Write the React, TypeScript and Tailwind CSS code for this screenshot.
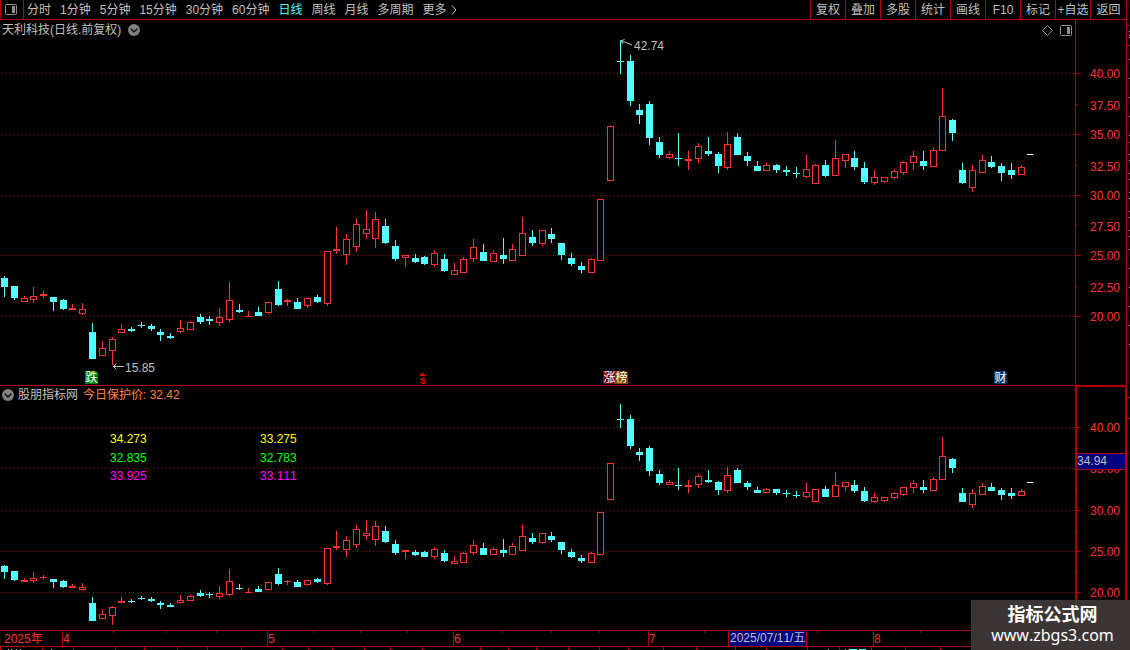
import React from "react";

type Candle = [high: number, top: number, bottom: number, low: number, rising: 0 | 1];

// One entry per trading day, in units of the main price scale (40.00 sits at 73, 20.00 at 316).
const candles: Candle[] = [
  [276, 278, 287, 297, 0], [286, 286, 298, 300, 0], [296, 298, 302, 302, 1], [287, 296, 300, 303, 1],
  [291, 294, 296, 298, 1], [297, 297, 302, 311, 0], [299, 300, 309, 310, 0], [304, 308, 310, 310, 1],
  [303, 309, 314, 315, 1], [323, 332, 359, 359, 0], [341, 348, 356, 356, 1], [337, 339, 351, 365, 1],
  [324, 329, 333, 333, 1], [327, 329, 331, 332, 0], [322, 325, 326, 328, 0], [324, 326, 329, 331, 0],
  [329, 332, 335, 341, 0], [333, 336, 338, 339, 0], [320, 328, 332, 333, 1], [321, 322, 330, 330, 1],
  [314, 317, 322, 324, 0], [316, 319, 321, 325, 0], [308, 317, 323, 326, 1], [282, 300, 320, 322, 1],
  [304, 310, 312, 313, 0], [311, 316, 317, 317, 1], [307, 312, 316, 316, 0], [302, 302, 313, 314, 1],
  [281, 289, 305, 306, 0], [299, 300, 302, 306, 1], [298, 302, 309, 309, 0], [298, 298, 306, 308, 1],
  [295, 297, 302, 303, 0], [251, 251, 304, 306, 1], [227, 249, 251, 254, 1], [234, 239, 255, 265, 1],
  [218, 224, 247, 252, 1], [210, 229, 234, 239, 1], [212, 219, 239, 248, 1], [219, 226, 243, 244, 0],
  [240, 246, 259, 261, 0], [255, 255, 258, 267, 1], [254, 258, 262, 263, 0], [256, 257, 264, 265, 0],
  [250, 253, 265, 267, 1], [254, 259, 271, 272, 0], [263, 270, 275, 275, 1], [257, 259, 273, 273, 1],
  [239, 247, 259, 262, 1], [244, 252, 261, 261, 0], [250, 253, 262, 262, 1], [238, 255, 259, 264, 0],
  [244, 249, 261, 261, 1], [217, 233, 256, 256, 1], [230, 237, 243, 246, 0], [230, 230, 244, 246, 1],
  [228, 234, 239, 243, 0], [243, 243, 255, 260, 0], [253, 258, 264, 266, 0], [262, 266, 270, 273, 0],
  [258, 259, 273, 273, 1], [199, 199, 261, 261, 1], [126, 126, 181, 181, 1], [40, 61, 62, 74, 0],
  [55, 61, 101, 106, 0], [104, 110, 115, 124, 0], [101, 104, 138, 145, 0], [137, 142, 155, 158, 0],
  [151, 154, 158, 159, 1], [133, 158, 159, 166, 0], [151, 159, 161, 170, 1], [143, 146, 159, 163, 1],
  [137, 151, 154, 156, 0], [152, 154, 166, 173, 0], [132, 144, 168, 170, 1], [133, 137, 155, 155, 0],
  [152, 156, 161, 166, 0], [161, 166, 171, 171, 0], [163, 165, 171, 171, 1], [164, 165, 170, 173, 0],
  [166, 170, 172, 176, 0], [167, 173, 174, 178, 0], [155, 169, 177, 178, 1], [164, 165, 184, 184, 1],
  [160, 165, 176, 177, 0], [140, 158, 176, 176, 1], [154, 154, 161, 168, 1], [151, 158, 167, 170, 0],
  [162, 168, 182, 184, 0], [170, 177, 183, 185, 1], [177, 177, 182, 183, 1], [169, 171, 178, 179, 1],
  [161, 162, 173, 175, 1], [151, 156, 163, 170, 1], [151, 161, 166, 170, 0], [147, 150, 167, 167, 1],
  [88, 116, 151, 151, 1], [119, 120, 133, 141, 0], [163, 170, 183, 184, 0], [165, 170, 188, 192, 1],
  [155, 160, 173, 173, 1], [156, 162, 167, 168, 0], [163, 166, 173, 181, 0], [163, 170, 175, 179, 0],
  [165, 167, 175, 175, 1],
];

const mainScale = (y: number) => y;
const subScale = (y: number) => Math.round(427.2 + (y - 73.5) * 0.679);

const UP = "#ff3232";
const DOWN = "#54ffff";
const LINE = "#b00000";
const SILVER = "#c0c0c0";

function Candles({ scale }: { scale: (y: number) => number }) {
  return (
    <g shapeRendering="crispEdges">
      {candles.map(([h, t, b, l, rising], i) => {
        const x = Math.round(4 + 9.775 * i);
        const high = scale(h);
        const top = scale(t);
        const bottom = Math.max(scale(b), top + 1);
        const low = scale(l);
        const color = rising ? UP : DOWN;
        const hollow = rising === 1 && bottom - top > 2;
        return (
          <g key={i}>
            {top > high && <rect x={x} y={high} width={1} height={top - high} fill={color} />}
            {low > bottom && <rect x={x} y={bottom} width={1} height={low - bottom} fill={color} />}
            {hollow ? (
              <rect x={x - 2.5} y={top + 0.5} width={6} height={bottom - top - 1} fill="#000" stroke={color} />
            ) : (
              <rect x={x - 3} y={top} width={7} height={bottom - top} fill={color} />
            )}
          </g>
        );
      })}
      <rect x={1027} y={scale(154)} width={6} height={1} fill="#fff" />
    </g>
  );
}

function GridLines({ ys }: { ys: number[] }) {
  return (
    <g shapeRendering="crispEdges">
      {ys.map((y) => (
        <line key={y} x1={1} x2={1075} y1={y + 0.5} y2={y + 0.5} stroke="#a81414" strokeDasharray="1 3" />
      ))}
    </g>
  );
}

function ChevronBadge() {
  return (
    <svg className="block h-3 w-3" viewBox="0 0 12 12" aria-hidden="true">
      <circle cx="6" cy="6" r="6" fill="#808080" />
      <path d="M2.8 4.8 6 8l3.2-3.2" fill="none" stroke="#111" strokeWidth="1.5" />
    </svg>
  );
}

function PanelIcon() {
  return (
    <svg className="block h-[11px] w-3" viewBox="0 0 12 11" aria-hidden="true">
      <rect x="0.5" y="0.5" width="11" height="10" rx="1" fill="none" stroke="#909090" />
      <rect x="7" y="2" width="3" height="7" fill="#909090" />
    </svg>
  );
}

function Marker({ x, color, label }: { x: number; color: string; label: string }) {
  return (
    <g>
      <path d={`M${x} 371h11l2 2v11h-13z`} fill={color} />
      <text x={x + 0.5} y={382} fill="#fff">{label}</text>
    </g>
  );
}

const periods = ["分时", "1分钟", "5分钟", "15分钟", "30分钟", "60分钟", "日线", "周线", "月线", "多周期"];
const actions = ["复权", "叠加", "多股", "统计", "画线", "F10", "标记", "+自选"];

function Toolbar() {
  return (
    <nav className="flex h-5 items-stretch border-b border-[#b00000] text-[#c0c0c0]">
      <button aria-label="侧栏" className="flex w-6 items-center border-x border-[#b00000] pl-1">
        <PanelIcon />
      </button>
      <div className="flex flex-1 items-center gap-[9px] pl-[3px]">
        {periods.map((p) => (
          <button key={p} className={p === "日线" ? "whitespace-nowrap text-[#54ffff]" : "whitespace-nowrap"}>
            {p}
          </button>
        ))}
        <button className="flex items-center gap-1 whitespace-nowrap">
          更多
          <svg className="h-[10px] w-[6px]" viewBox="0 0 6 10" aria-hidden="true">
            <path d="M1 0.5 5 5 1 9.5" fill="none" stroke={SILVER} />
          </svg>
        </button>
      </div>
      <div className="flex items-stretch">
        {actions.map((a) => (
          <button key={a} className="w-[35px] whitespace-nowrap border-l border-[#b00000]">
            {a}
          </button>
        ))}
        <button className="w-9 whitespace-nowrap border-l border-[#b00000]">返回</button>
      </div>
    </nav>
  );
}

const mainTicks: [number, number, string][] = [
  [73, 78, "40.00"], [104, 110, "37.50"], [134, 139, "35.00"], [165, 171, "32.50"], [195, 200, "30.00"],
  [225, 231, "27.50"], [255, 260, "25.00"], [286, 292, "22.50"], [316, 321, "20.00"],
];
const subTicks: [number, string][] = [[427, "40.00"], [468, "35.00"], [510, "30.00"], [551, "25.00"], [592, "20.00"]];

function MainPanel() {
  return (
    <section className="flex border-b border-[#b00000]">
      <div className="min-w-0 flex-1">
        <header className="flex h-5 items-center pl-[2px] pr-[3px] text-[#c0c0c0]">
          <h1 className="whitespace-nowrap">天利科技(日线.前复权)</h1>
          <button aria-label="展开" className="ml-[7px]"><ChevronBadge /></button>
          <button aria-label="标注" className="ml-auto">
            <svg className="block h-[11px] w-[11px]" viewBox="0 0 11 11" aria-hidden="true">
              <path d="M5.5 0.5l5 5-5 5-5-5z" fill="none" stroke="#909090" />
            </svg>
          </button>
          <button aria-label="侧栏" className="ml-[7px]"><PanelIcon /></button>
        </header>
        <svg className="block h-[345px] w-full overflow-visible" viewBox="0 40 1075 345" fontSize="12">
          <GridLines ys={[73, 134, 195, 255, 316]} />
          <Candles scale={mainScale} />
          <g stroke={SILVER} fill="none">
            <path d="M113 366.5h11M116.5 363.5l-3 3 3 3" />
            <path d="M621 41.5l4 .5 7 3M624.5 39.5l-3.500 1.500 2 3" />
          </g>
          <text x="125" y="372" fill={SILVER}>15.85</text>
          <text x="634" y="50" fill={SILVER}>42.74</text>
          <Marker x={85} color="#008000" label="跌" />
          <Marker x={603} color="#800000" label="涨" />
          <Marker x={615} color="#804000" label="榜" />
          <Marker x={994} color="#003a70" label="财" />
          <path d="M422.500 372.500l3.500 3.500h-7z" fill="#ff0000" />
          <text x="420" y="384" fontSize="9" fontWeight="700" fill="#ff0000">S</text>
        </svg>
      </div>
      <svg className="block h-[365px] w-[51px]" viewBox="1075 20 51 365" fontSize="12" fill={UP}>
        <g shapeRendering="crispEdges" fill={LINE}>
          <rect x="1075" y="20" width="1" height="365" />
          {mainTicks.map(([y], i) => (
            <rect key={y} x="1076" y={y} width={i % 2 ? 2 : 5} height="1" />
          ))}
        </g>
        {mainTicks.map(([, y, label]) => (
          <text key={label} x="1090" y={y}>{label}</text>
        ))}
      </svg>
    </section>
  );
}

const readings: [number, string, string, string][] = [
  [443, "#ffff00", "34.273", "33.275"],
  [462, "#00ff00", "32.835", "32.783"],
  [480, "#ff00ff", "33.925", "33.111"],
];

function SubPanel() {
  return (
    <section className="flex">
      <div className="min-w-0 flex-1">
        <header className="flex h-[17px] items-center pl-[2px] text-[#c0c0c0]">
          <button aria-label="展开"><ChevronBadge /></button>
          <h2 className="ml-1 whitespace-nowrap">股朋指标网</h2>
          <p className="ml-[5px] whitespace-nowrap text-[#ff8040]">今日保护价: 32.42</p>
        </header>
        <svg className="block h-[227px] w-full" viewBox="0 403 1075 227" fontSize="12">
          <GridLines ys={subTicks.map(([y]) => y)} />
          {readings.map(([y, color, a, b]) => (
            <g key={y} fill={color}>
              <text x="110" y={y}>{a}</text>
              <text x="260" y={y}>{b}</text>
            </g>
          ))}
          <Candles scale={subScale} />
        </svg>
      </div>
      <svg className="block h-[244px] w-[51px]" viewBox="1075 386 51 244" fontSize="12" fill={UP}>
        <g shapeRendering="crispEdges" fill={LINE}>
          <rect x="1075" y="386" width="2" height="244" />
          <rect x="1125" y="386" width="1" height="244" />
          <rect x="1076" y="386" width="50" height="1" />
          {subTicks.map(([y]) => (
            <g key={y}>
              <rect x="1077" y={y} width="4" height="1" />
              <rect x="1077" y={y + 21} width="1" height="1" />
            </g>
          ))}
        </g>
        {subTicks.map(([y, label]) => (
          <text key={label} x="1090" y={y + 5}>{label}</text>
        ))}
        <g shapeRendering="crispEdges">
          <rect x="1077" y="453" width="48" height="17" fill={LINE} />
          <rect x="1077" y="454" width="48" height="15" fill="#000080" />
        </g>
        <text x="1077" y="465" fill={SILVER}>34.94</text>
      </svg>
    </section>
  );
}

const months: [number, string][] = [[62, "4"], [267, "5"], [453, "6"], [648, "7"], [873, "8"]];
const weekTicks = [113, 165, 216, 314, 360, 407, 502, 551, 599, 704, 817, 920];
const lowerTicks = [
  0, 42, 73, 115, 144, 177, 207, 241, 282, 308, 332, 364, 390, 422, 480, 508, 536, 568, 599, 628, 663, 696, 735, 766,
  807, 839, 871, 905, 940,
];

function TimeAxis() {
  return (
    <svg className="block h-5 w-full" viewBox="0 630 1126 20" fontSize="12" fill={UP}>
      <g shapeRendering="crispEdges" fill={LINE}>
        <rect x="0" y="630" width="1126" height="1" />
        <rect x="0" y="646" width="1126" height="1" />
        {months.map(([x]) => <rect key={x} x={x} y="631" width="1" height="15" />)}
        {weekTicks.map((x) => <rect key={x} x={x} y="631" width="1" height="2" />)}
        {lowerTicks.map((x) => <rect key={x} x={x} y="647" width="1" height="3" />)}
        <rect x="728" y="631" width="79" height="15" />
        <rect x="729" y="631" width="77" height="15" fill="#000080" />
        <g fill={SILVER}>
          {[8, 11, 16, 20, 51, 828, 845].map((x) => <rect key={x} x={x} y="649" width="1" height="1" />)}
        </g>
        <rect x="849" y="649" width="8" height="1" fill={DOWN} />
        <rect x="859" y="649" width="7" height="1" fill={DOWN} />
      </g>
      <text x="4" y="643">2025年</text>
      {months.map(([x, label]) => <text key={label} x={x + 1} y="643">{label}</text>)}
      <text x="730" y="642" fill={SILVER}>2025/07/11/五</text>
    </svg>
  );
}

const edgeRed = [25, 45, 142, 397, 418];
const edgeWhite = [31, 35, 37, 59, 78, 97, 116, 135, 154, 160, 173, 179, 192, 198, 211, 217, 230, 236, 249, 268, 287, 306, 325, 344];

function EdgeRuler() {
  return (
    <svg className="block h-[650px] w-1" viewBox="0 0 4 650" shapeRendering="crispEdges" aria-hidden="true">
      <rect width="1" height="650" fill={LINE} />
      {edgeRed.map((y) => <rect key={y} x="1" y={y} width="3" height="1" fill={LINE} />)}
      {edgeWhite.map((y) => <rect key={y} x="3" y={y} width="1" height="1" fill={SILVER} />)}
    </svg>
  );
}

export default function App() {
  return (
    <main className="relative flex min-h-screen items-start overflow-hidden bg-black font-['Liberation_Sans','Noto_Sans_CJK_SC',sans-serif] text-[12px] leading-4 [font-kerning:none]">
      <div className="min-w-0 flex-1">
        <Toolbar />
        <MainPanel />
        <SubPanel />
        <TimeAxis />
      </div>
      <EdgeRuler />
      <aside className="absolute bottom-0 right-0 flex h-[50px] w-[159px] flex-col items-center justify-center bg-[#3b3535] pl-1 text-white">
        <strong className="text-[18px] leading-5">指标公式网</strong>
        <a href="#" className="font-['Noto_Sans',sans-serif] text-[16px] leading-5">www.zbgs3.com</a>
      </aside>
    </main>
  );
}
